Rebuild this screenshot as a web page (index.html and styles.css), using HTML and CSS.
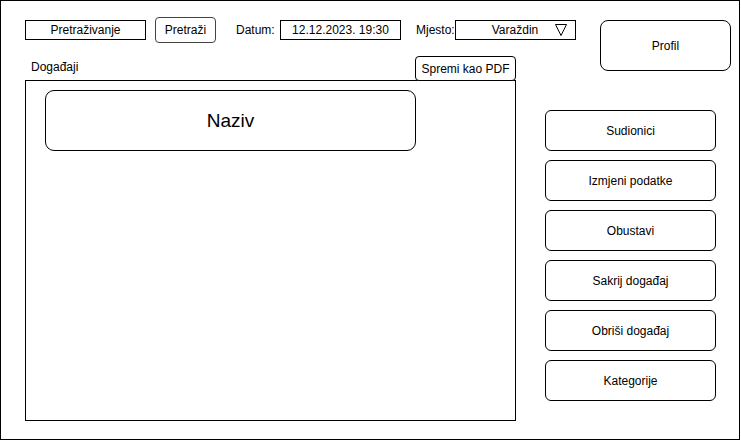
FILE: index.html
```html
<!DOCTYPE html>
<html lang="hr">
<head>
<meta charset="utf-8">
<title>Događaji</title>
<link rel="stylesheet" href="styles.css">
</head>
<body>
<div class="frame">
  <div class="left">
    <div class="toolbar">
      <div class="field">Pretraživanje</div>
      <div class="btn-search">Pretraži</div>
      <div class="label label-date">Datum:</div>
      <div class="field">12.12.2023. 19:30</div>
      <div class="label label-place">Mjesto:</div>
      <div class="field select">
        <span class="select-text">Varaždin</span>
        <svg class="tri" width="12" height="12" viewBox="0 0 12 12"><path d="M0.5 0.5 H11.5 L6 11.5 Z" fill="none" stroke="#000" stroke-width="1"/></svg>
      </div>
    </div>
    <div class="header">
      <div class="title">Događaji</div>
      <div class="btn-pdf">Spremi kao PDF</div>
    </div>
    <div class="main">
      <div class="list">
        <div class="card">Naziv</div>
      </div>
      <div class="actions">
        <div class="action">Sudionici</div>
        <div class="action">Izmjeni podatke</div>
        <div class="action">Obustavi</div>
        <div class="action">Sakrij događaj</div>
        <div class="action">Obriši događaj</div>
        <div class="action">Kategorije</div>
      </div>
    </div>
  </div>
  <div class="profile">Profil</div>
</div>
</body>
</html>
```

FILE: styles.css
```css
* { box-sizing: border-box; }
html, body { margin: 0; padding: 0; background: #fff; }
body {
  font-family: "Liberation Sans", Arial, sans-serif;
  font-size: 12px;
  color: #000;
}
.frame {
  width: 740px;
  height: 440px;
  border: 1px solid #000;
  display: flex;
  align-items: flex-start;
  padding: 19px 0 0 24px;
}
.left {
  width: 551px;
  flex: none;
  display: flex;
  flex-direction: column;
}
.toolbar {
  height: 20px;
  display: flex;
  align-items: center;
}
.field {
  width: 121px;
  height: 20px;
  flex: none;
  border: 1px solid #000;
  display: flex;
  align-items: center;
  justify-content: center;
  white-space: nowrap;
}
.btn-search {
  margin-left: 9px;
  width: 61px;
  height: 26px;
  flex: none;
  border: 1px solid #444;
  border-radius: 4px;
  display: flex;
  align-items: center;
  justify-content: center;
}
.label { white-space: nowrap; flex: none; }
.label-date { margin-left: 20px; width: 44px; }
.label-place { margin-left: 15px; width: 39px; }
.select { justify-content: flex-start; padding-right: 8px; }
.select-text { flex: 1; text-align: center; padding-left: 19px; }
.tri { display: block; flex: none; }
.header {
  width: 491px;
  margin-top: 16px;
  height: 25px;
  display: flex;
  justify-content: space-between;
  align-items: flex-end;
}
.title {
  padding-left: 6px;
  padding-bottom: 7px;
}
.btn-pdf {
  width: 101px;
  height: 25px;
  border: 1px solid #000;
  border-radius: 4px;
  display: flex;
  align-items: center;
  justify-content: center;
  white-space: nowrap;
  background: #fff;
  position: relative;
  z-index: 1;
}
.main {
  margin-top: -1px;
  display: flex;
}
.list {
  flex: none;
  width: 491px;
  height: 341px;
  border: 1px solid #000;
  padding: 9px 0 0 19px;
}
.card {
  width: 371px;
  height: 61px;
  border: 1px solid #000;
  border-radius: 9px;
  display: flex;
  align-items: center;
  justify-content: center;
  font-size: 19px;
}
.actions {
  flex: none;
  margin-left: 29px;
  padding-top: 30px;
  width: 171px;
  display: flex;
  flex-direction: column;
  gap: 9px;
}
.action {
  height: 41px;
  border: 1px solid #000;
  border-radius: 6px;
  display: flex;
  align-items: center;
  justify-content: center;
  white-space: nowrap;
}
.profile {
  flex: none;
  margin-left: 24px;
  width: 131px;
  height: 51px;
  border: 1px solid #000;
  border-radius: 8px;
  display: flex;
  align-items: center;
  justify-content: center;
}
```
